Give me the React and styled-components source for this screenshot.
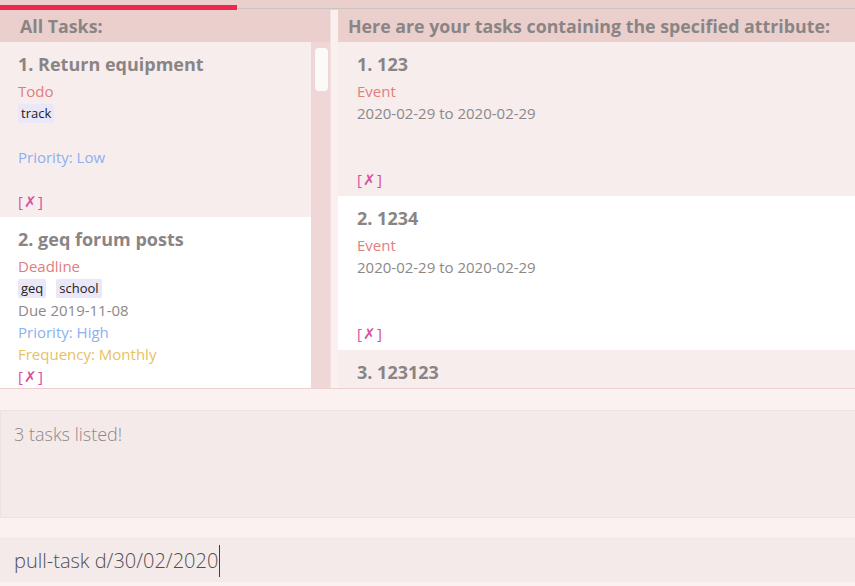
import React from "react";
import styled, { createGlobalStyle } from "styled-components";

const Global = createGlobalStyle`
  html, body { margin: 0; padding: 0; background: #faf1f0; }
  body { font-family: "Open Sans", "Noto Sans", sans-serif; }
  * { box-sizing: border-box; }
`;

const Root = styled.div`
  width: 855px;
  height: 586px;
  display: flex;
  flex-direction: column;
  background: #faf1f0;
  overflow: hidden;
`;

const TopBar = styled.div`
  height: 10px;
  background: #ebcfcd;
  display: flex;
  align-items: flex-end;
  padding-bottom: 1px;
  flex-shrink: 0;
`;

const Track = styled.div`
  position: relative;
  flex: 1;
  height: 1px;
  background: #cbc3c3;
`;

const Progress = styled.div`
  position: absolute;
  left: 0;
  bottom: -1px;
  height: 5px;
  background: #ef2750;
`;

const Main = styled.div`
  height: 379px;
  display: flex;
  border-bottom: 1px solid #ecd0ce;
  flex-shrink: 0;
`;

const Pane = styled.div`
  display: flex;
  flex-direction: column;
  width: ${(p) => (p.$width ? p.$width + "px" : "auto")};
  flex: ${(p) => (p.$width ? "none" : "1")};
  min-width: 0;
`;

const Gutter = styled.div`
  width: 8px;
  background: #faf0f0;
  border-left: 1px solid #f3e0df;
`;

const Header = styled.div`
  height: 32px;
  background: #ebcfcd;
  color: #8a8585;
  font-weight: 700;
  font-size: 17.8px;
  display: flex;
  align-items: center;
  padding-left: ${(p) => p.$pad}px;
  white-space: nowrap;
  flex-shrink: 0;
`;

const ListArea = styled.div`
  flex: 1;
  display: flex;
  min-height: 0;
`;

const CardList = styled.div`
  flex: 1;
  overflow: hidden;
  display: flex;
  flex-direction: column;
`;

const ScrollTrack = styled.div`
  width: 19px;
  background: #efd7d7;
  padding: 6px 2px 0 4px;
`;

const Thumb = styled.div`
  height: 43px;
  background: #fcfaf8;
  border-radius: 4px;
`;

const Card = styled.div`
  background: ${(p) => (p.$alt ? "#ffffff" : "#f7eded")};
  padding: 10px 0 ${(p) => p.$bottom}px ${(p) => p.$pad}px;
  flex-shrink: 0;
`;

const Title = styled.div`
  height: 24px;
  line-height: 24px;
  font-size: 18px;
  font-weight: 700;
  color: #8a8585;
  margin-bottom: 4px;
  white-space: nowrap;
`;

const Row = styled.div`
  height: 22px;
  line-height: 22px;
  font-size: 15px;
  color: ${(p) => p.$color || "#8c8888"};
  display: flex;
  align-items: center;
  gap: 10px;
  white-space: nowrap;
`;

const Tag = styled.span`
  background: #e9e7f8;
  color: #222;
  font-size: 13px;
  line-height: 19px;
  padding: 0 3px;
  border-radius: 2px;
`;

const Cross = styled.span`
  color: #d94fa3;
  font-size: 15px;
  letter-spacing: 1px;
`;

const Spacer = styled.div`
  height: ${(p) => p.$h}px;
  flex-shrink: 0;
  background: #faf1f0;
`;

const ResultBox = styled.div`
  height: 108px;
  background: #f5eaea;
  border-top: 1px solid #ebe3e3;
  border-bottom: 1px solid #ebe3e3;
  border-left: 1px solid #ebe3e3;
  padding: 11px 0 0 13px;
  font-size: 18px;
  font-weight: 300;
  color: #8d8888;
  flex-shrink: 0;
`;

const CommandBox = styled.div`
  height: 44px;
  background: #f5eaea;
  border-top: 1px solid #efe6e6;
  display: flex;
  align-items: center;
  padding-left: 14px;
  font-size: 20px;
  font-weight: 300;
  color: #505050;
  flex-shrink: 0;
`;

const Caret = styled.span`
  display: inline-block;
  width: 1px;
  height: 32px;
  background: #404040;
  margin-left: 1px;
`;

const X = () => (
  <Row>
    <Cross>[✗]</Cross>
  </Row>
);

const leftTasks = [
  {
    title: "1. Return equipment",
    type: "Todo",
    tags: ["track"],
    due: "",
    priority: "Priority: Low",
    freq: "",
  },
  {
    title: "2. geq forum posts",
    type: "Deadline",
    tags: ["geq", "school"],
    due: "Due 2019-11-08",
    priority: "Priority: High",
    freq: "Frequency: Monthly",
  },
];

const rightTasks = [
  { title: "1. 123", type: "Event", date: "2020-02-29 to 2020-02-29" },
  { title: "2. 1234", type: "Event", date: "2020-02-29 to 2020-02-29" },
  { title: "3. 123123", type: "Event", date: "2020-02-29 to 2020-02-29" },
];

export default function App() {
  return (
    <Root>
      <Global />
      <TopBar>
        <Track>
          <Progress style={{ width: "237px" }} />
        </Track>
      </TopBar>
      <Main>
        <Pane $width={330}>
          <Header $pad={20}>All Tasks:</Header>
          <ListArea>
            <CardList>
              {leftTasks.map((t, i) => (
                <Card key={t.title} $alt={i % 2 === 1} $pad={18} $bottom={5}>
                  <Title>{t.title}</Title>
                  <Row $color="#e07e7e">{t.type}</Row>
                  <Row>
                    {t.tags.map((g) => (
                      <Tag key={g}>{g}</Tag>
                    ))}
                  </Row>
                  <Row>{t.due}</Row>
                  <Row $color="#8db0ef">{t.priority}</Row>
                  <Row $color="#e8c162">{t.freq}</Row>
                  <X />
                </Card>
              ))}
            </CardList>
            <ScrollTrack>
              <Thumb />
            </ScrollTrack>
          </ListArea>
        </Pane>
        <Gutter />
        <Pane>
          <Header $pad={10}>
            Here are your tasks containing the specified attribute:
          </Header>
          <CardList>
            {rightTasks.map((t, i) => (
              <Card key={t.title} $alt={i % 2 === 1} $pad={19} $bottom={6}>
                <Title>{t.title}</Title>
                <Row $color="#e07e7e">{t.type}</Row>
                <Row>{t.date}</Row>
                <Row />
                <Row />
                <X />
              </Card>
            ))}
          </CardList>
        </Pane>
      </Main>
      <Spacer $h={21} />
      <ResultBox>3 tasks listed!</ResultBox>
      <Spacer $h={20} />
      <CommandBox>
        pull-task d/30/02/2020
        <Caret />
      </CommandBox>
    </Root>
  );
}
